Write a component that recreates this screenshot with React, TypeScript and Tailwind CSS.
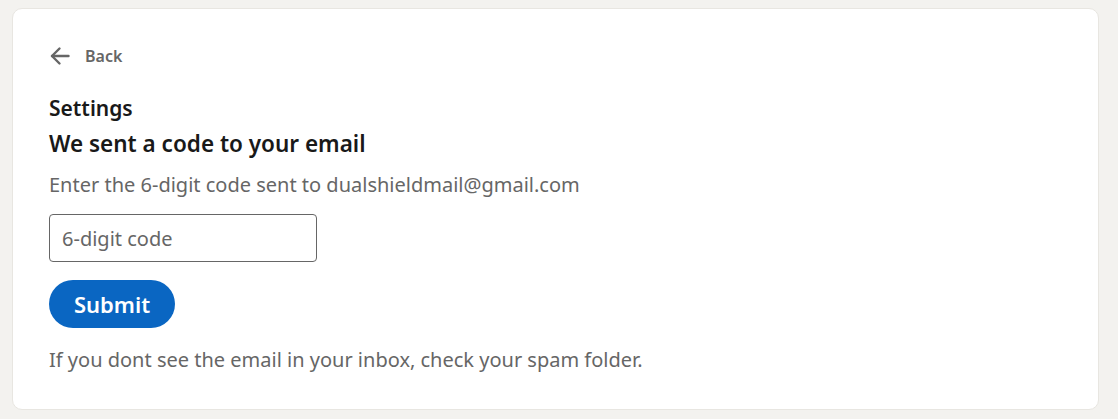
import React, { useState } from 'react';

const ArrowLeft = () => (
    <svg width="20" height="20" viewBox="0 0 20 20" fill="none" stroke="currentColor" strokeWidth="2.4" strokeLinecap="round" strokeLinejoin="round" aria-hidden="true">
        <path d="M18.5 10H2" />
        <path d="M9.5 2.5L2 10l7.5 7.5" />
    </svg>
);

const App: React.FC = () => {
    const [code, setCode] = useState('');

    return (
        <div className="min-h-screen bg-[#f3f2ef] pl-3 pr-[19px] pt-2 pb-[10px] font-['Noto_Sans',sans-serif]">
            <div className="bg-white rounded-[10px] border border-[#e8e6e1] pl-9 pr-6 pt-[35px] pb-[35px]">
                <button className="flex items-center h-6 gap-[15px] text-[#666666] font-semibold text-[16px] leading-6">
                    <span className="ml-px"><ArrowLeft /></span>
                    <span>Back</span>
                </button>

                <h1 className="mt-[26px] text-[21px] leading-7 font-semibold text-[#191919]">Settings</h1>
                <h2 className="mt-[8px] text-[22.5px] leading-7 font-semibold text-[#191919]">We sent a code to your email</h2>
                <p className="mt-[13px] text-[20px] leading-7 text-[#666666]">
                    Enter the 6-digit code sent to dualshieldmail@gmail.com
                </p>

                <input
                    value={code}
                    onChange={(e) => setCode(e.target.value)}
                    placeholder="6-digit code"
                    className="mt-[15px] block w-[268px] h-[48px] rounded-[4px] border border-[#666666] px-3 text-[20px] text-[#191919] placeholder:text-[#666666] outline-none"
                />

                <button className="mt-[18px] block h-[48px] w-[126px] rounded-full bg-[#0a66c2] text-white text-[22px] font-semibold">
                    Submit
                </button>

                <p className="mt-[18px] text-[20px] leading-7 text-[#666666]">
                    If you dont see the email in your inbox, check your spam folder.
                </p>
            </div>
        </div>
    );
};

export default App;
